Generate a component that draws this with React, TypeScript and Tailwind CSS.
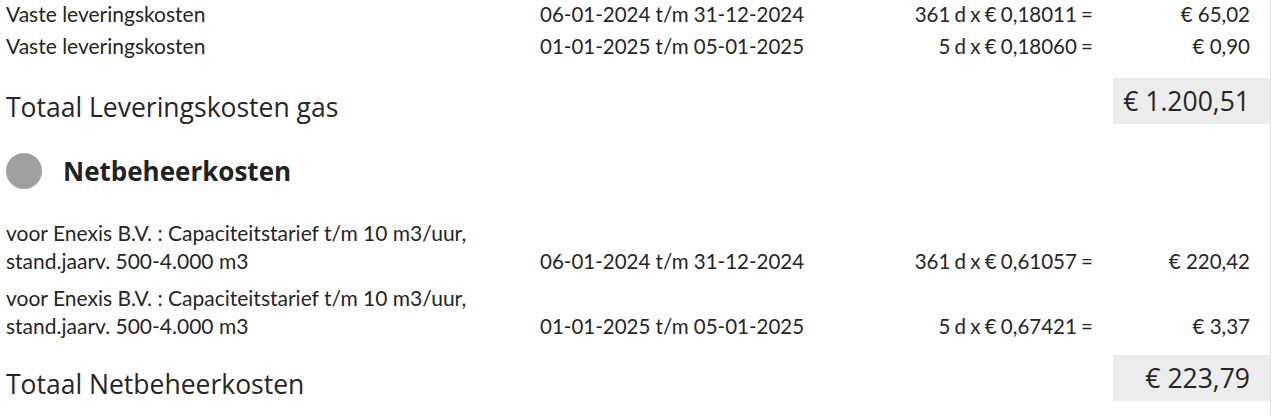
const rowFont = { fontFamily: "Lato, 'Open Sans', sans-serif" };
const headFont = { fontFamily: "'Open Sans', Lato, sans-serif" };

type Line = {
  label: string[];
  period: string;
  calc: string;
  amount: string;
};

const supplyLines: Line[] = [
  {
    label: ["Vaste leveringskosten"],
    period: "06-01-2024 t/m 31-12-2024",
    calc: "361 d x € 0,18011 =",
    amount: "€ 65,02",
  },
  {
    label: ["Vaste leveringskosten"],
    period: "01-01-2025 t/m 05-01-2025",
    calc: "5 d x € 0,18060 =",
    amount: "€ 0,90",
  },
];

const gridLines: Line[] = [
  {
    label: ["voor Enexis B.V. : Capaciteitstarief t/m 10 m3/uur,", "stand.jaarv. 500-4.000 m3"],
    period: "06-01-2024 t/m 31-12-2024",
    calc: "361 d x € 0,61057 =",
    amount: "€ 220,42",
  },
  {
    label: ["voor Enexis B.V. : Capaciteitstarief t/m 10 m3/uur,", "stand.jaarv. 500-4.000 m3"],
    period: "01-01-2025 t/m 05-01-2025",
    calc: "5 d x € 0,67421 =",
    amount: "€ 3,37",
  },
];

const CostRow = ({ line }: { line: Line }) => (
  <div
    className="grid grid-cols-[534px_250px_303px_157px] items-end whitespace-nowrap py-[2px] text-[20.5px] leading-[28px] text-[#262626]"
    style={rowFont}
  >
    <div className="text-[21px]">
      {line.label.map((l, i) => (
        <div key={i}>{l}</div>
      ))}
    </div>
    <div>{line.period}</div>
    <div className="text-right [word-spacing:-1px]">{line.calc}</div>
    <div className="text-right">{line.amount}</div>
  </div>
);

const TotalRow = ({ label, amount }: { label: string; amount: string }) => (
  <div className="flex items-start justify-between text-[26.5px] text-[#262626]" style={headFont}>
    <div className="pt-[10px]">{label}</div>
    <div className="flex h-[46px] w-[157px] items-center justify-end bg-[#ececec] pr-[20px] pt-[2px]">{amount}</div>
  </div>
);

export default function App() {
  return (
    <div className="h-[418px] w-[1280px] overflow-hidden bg-white">
      <div className="h-full w-[1271px] border-r border-[#e2e2e2]">
        <div className="mt-[-2px] pl-[6px]">
          {supplyLines.map((l, i) => (
            <CostRow key={i} line={l} />
          ))}
          <div className="mt-[16px]">
            <TotalRow label="Totaal Leveringskosten gas" amount="€ 1.200,51" />
          </div>

          <div className="mt-[24px] flex items-center gap-[21px]">
            <div className="h-[36px] w-[36px] rounded-full bg-[#a0a0a0]" />
            <h2 className="text-[26px] font-bold text-[#222]" style={headFont}>
              Netbeheerkosten
            </h2>
          </div>

          <div className="mt-[26px] flex flex-col gap-[5px]">
            {gridLines.map((l, i) => (
              <CostRow key={i} line={l} />
            ))}
          </div>
          <div className="mt-[13px]">
            <TotalRow label="Totaal Netbeheerkosten" amount="€ 223,79" />
          </div>
        </div>
      </div>
    </div>
  );
}
